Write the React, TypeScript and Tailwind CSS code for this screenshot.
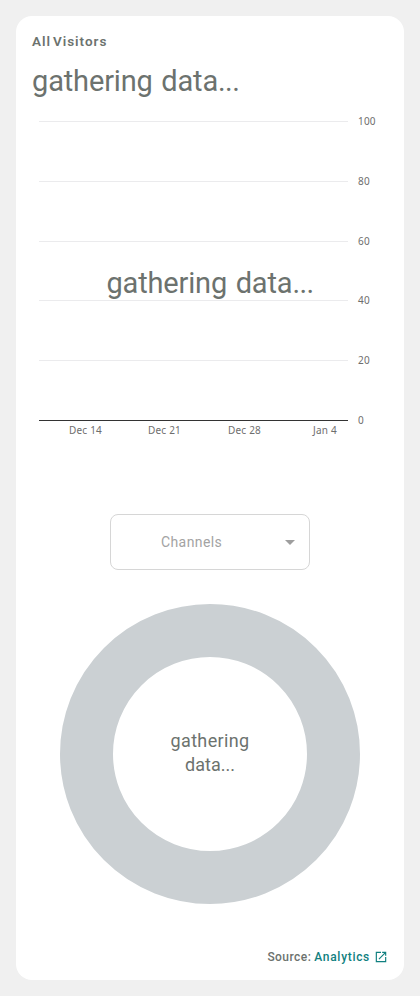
const ticks = [
  { label: '100', y: 16.5 },
  { label: '80', y: 76.5 },
  { label: '60', y: 136.5 },
  { label: '40', y: 195.5 },
  { label: '20', y: 255.5 },
];

const dates = [
  { label: 'Dec 14', x: 69.5 },
  { label: 'Dec 21', x: 148.5 },
  { label: 'Dec 28', x: 228.5 },
  { label: 'Jan 4', x: 309 },
];

function VisitorsChart() {
  return (
    <svg width="388" height="345" viewBox="0 0 388 345" className="block font-['Noto_Sans',sans-serif] text-[10px] tracking-[0.2px]">
      {ticks.map((t) => (
        <g key={t.label}>
          <path d={`M23 ${t.y}H332`} stroke="#ebebed" />
          <text x="342" y={t.y + 3.5} fill="#6e6e6e">{t.label}</text>
        </g>
      ))}
      <path d="M23 315.5H332" stroke="#333333" />
      <text x="342" y="319" fill="#6e6e6e">0</text>
      {dates.map((d) => (
        <text key={d.label} x={d.x} y="329" fill="#6e6e6e" textAnchor="middle">{d.label}</text>
      ))}
    </svg>
  );
}

export default function App() {
  return (
    <div className="h-[996px] w-[420px] bg-[#f0f0f0] p-4 font-['Roboto',sans-serif] text-[#6c726e]">
      <section className="flex h-[964px] flex-col rounded-2xl bg-white">
        <h2 className="mt-[15px] ml-4 h-5 text-[13.5px] leading-5 font-semibold tracking-[1px] [word-spacing:-2.5px] whitespace-nowrap">All Visitors</h2>
        <div className="mt-2.5 ml-4 h-10 text-[29px] leading-10 tracking-[-0.15px] [word-spacing:1.5px] whitespace-nowrap">gathering data<span className="tracking-[-0.6px]">...</span></div>
        <div className="relative mt-1">
          <VisitorsChart />
          <div className="absolute top-[158px] left-0 w-full text-center text-[29px] leading-10 tracking-[-0.15px] [word-spacing:1.5px] whitespace-nowrap">gathering data<span className="tracking-[-0.6px]">...</span></div>
        </div>
        <button className="relative mx-auto mt-[64px] flex h-14 w-[200px] items-center rounded-lg border border-[#d6d6d6] pl-[50px] text-[14px] leading-5 tracking-[0.4px] text-[#a3a3a3]">
          <span>Channels</span>
          <svg width="10" height="5" viewBox="0 0 10 5" className="mr-[14px] ml-auto" fill="#9e9e9e"><path d="M0 0h10L5 5z" /></svg>
        </button>
        <div className="mx-auto mt-[34px] flex size-[300px] items-center justify-center rounded-full border-[53px] border-[#cbd0d3] text-center text-[18px] leading-6">
          <div className="w-24 pb-0.5"><span className="tracking-[0.35px]">gathering</span> data...</div>
        </div>
        <footer className="mt-[43px] mr-4 flex h-5 items-center justify-end text-[12px] leading-5 font-medium">
          <span className="tracking-[0.45px]">Source:</span>
          <a className="ml-[3px] tracking-[0.7px] text-[#108080]">Analytics</a>
          <svg width="14" height="14" viewBox="0 0 24 24" className="ml-1" fill="#108080">
            <path d="M19 19H5V5h7V3H3v18h18v-9h-2v7zM14 3v2h3.59l-9.83 9.83 1.41 1.41L19 6.41V10h2V3h-7z" />
          </svg>
        </footer>
      </section>
    </div>
  );
}
